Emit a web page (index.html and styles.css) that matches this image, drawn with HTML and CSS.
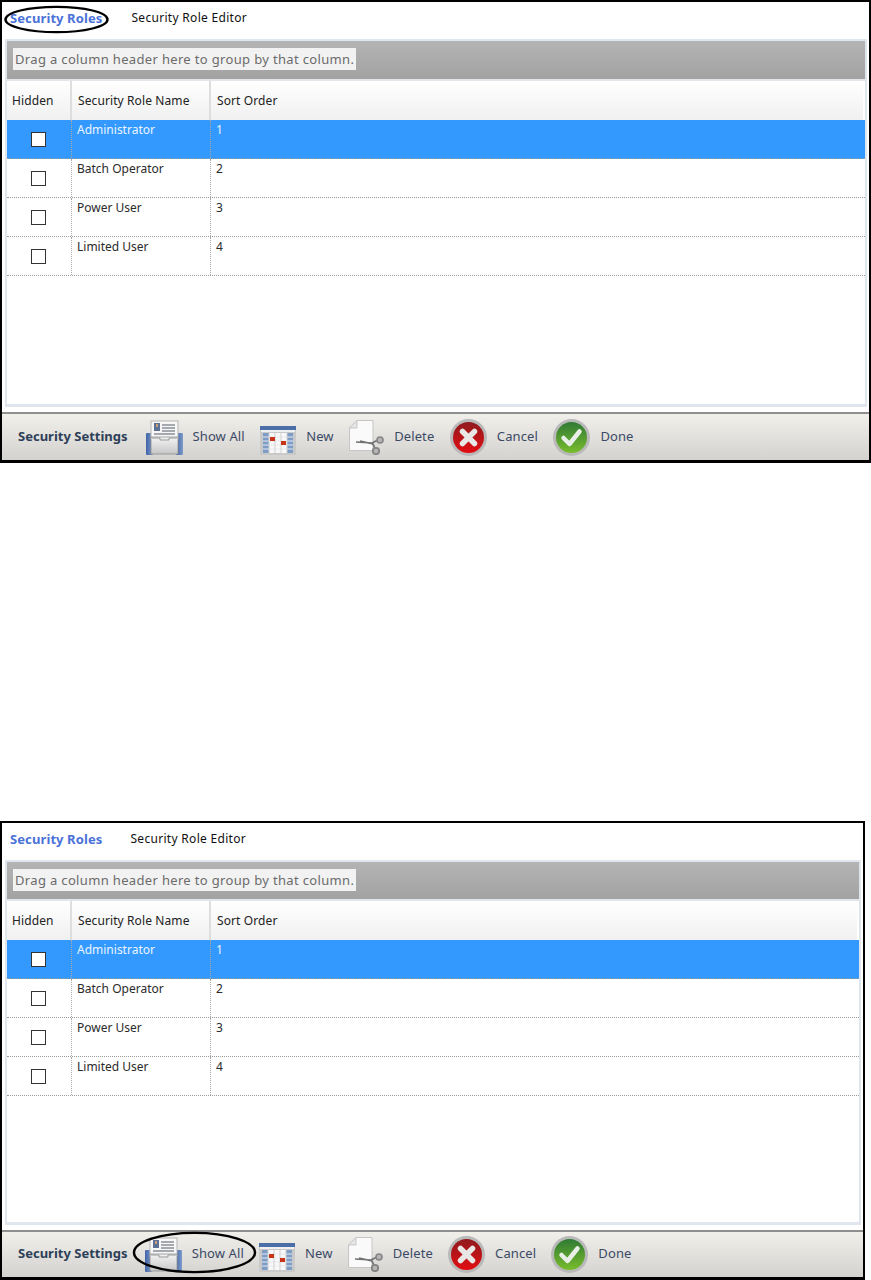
FILE: index.html
```html
<!DOCTYPE html>
<html lang="en">
<head>
    <meta charset="UTF-8">
    <title>Security Roles</title>
    <link rel="stylesheet" href="styles.css">
</head>
<body>

    <!-- toolbar icons, used by both windows -->
    <svg class="icon-defs" width="0" height="0">
        <defs>
            <linearGradient id="red-fill" x1="0" y1="0" x2="0" y2="1">
                <stop offset="0" stop-color="#8f1a1e"/>
                <stop offset="1" stop-color="#e30d12"/>
            </linearGradient>
            <linearGradient id="green-fill" x1="0" y1="0" x2="0" y2="1">
                <stop offset="0" stop-color="#2f7a35"/>
                <stop offset="1" stop-color="#79bd2c"/>
            </linearGradient>
            <linearGradient id="tray-fill" x1="0" y1="0" x2="0" y2="1">
                <stop offset="0" stop-color="#f4f4f4"/>
                <stop offset="1" stop-color="#c6c6c6"/>
            </linearGradient>
            <linearGradient id="side-fill" x1="0" y1="0" x2="1" y2="0">
                <stop offset="0" stop-color="#3f63a8"/>
                <stop offset="1" stop-color="#7f9bca"/>
            </linearGradient>
        </defs>
        <symbol id="icon-show" viewBox="0 0 37 35">
            <rect x="0" y="13" width="7" height="22" rx="1" fill="url(#side-fill)"/>
            <rect x="30" y="13" width="7" height="22" rx="1" fill="url(#side-fill)"/>
            <rect x="5" y="1" width="27" height="18" fill="#f7f7f7" stroke="#b5b5b5"/>
            <rect x="8" y="3" width="6" height="8" fill="#5c6f94"/>
            <rect x="10" y="4" width="2" height="3" fill="#c79a78"/>
            <path d="M16 5h13M16 8h13M16 11h13M8 14h21" stroke="#8a8f98" stroke-width="1.3"/>
            <path d="M5 17h27v17H5z" fill="url(#tray-fill)" stroke="#8d8d8d" stroke-width=".8"/>
            <path d="M6 18h8v2h9v-2h8" fill="none" stroke="#9a9a9a"/>
        </symbol>
        <symbol id="icon-new" viewBox="0 0 36 29">
            <rect x="0" y="0" width="36" height="29" fill="#c9c9c9"/>
            <rect x="0" y="0" width="36" height="4" fill="#4c6ea6"/>
            <rect x="1" y="4" width="34" height="2" fill="#eef0f2"/>
            <rect x="3" y="7" width="30" height="20" fill="#f8f8f8"/>
            <path d="M3 7h6v20H3zM27 7h6v20h-6z" fill="#7d9cc6"/>
            <path d="M3 11h30M3 15h30M3 19h30M3 23h30" stroke="#e6e9ee" stroke-width="1.2"/>
            <path d="M9 7v20M15 7v20M21 7v20M27 7v20" stroke="#d0d0d0" stroke-width="1"/>
            <rect x="10" y="11" width="5" height="4" fill="#c8341a"/>
            <rect x="21" y="15" width="5" height="4" fill="#c8341a"/>
        </symbol>
        <symbol id="icon-delete" viewBox="0 0 35 35">
            <path d="M8 .5h16v30H.5V8z" fill="#fafafa" stroke="#c6c6c6"/>
            <path d="M8 .5V8H.5z" fill="#e6e6e6" stroke="#c6c6c6"/>
            <path d="M7 22l16 1 8-4M11 21l13 3 3 7" fill="none" stroke="#6f7172" stroke-width="1.7"/>
            <circle cx="31" cy="20" r="3" fill="#b5b5b5" stroke="#858585" stroke-width="1.6"/>
            <circle cx="27" cy="31" r="3.200" fill="#b5b5b5" stroke="#858585" stroke-width="1.8"/>
        </symbol>
        <symbol id="icon-cancel" viewBox="0 0 37 37">
            <circle cx="18.5" cy="18.5" r="18.5" fill="#b9b9b9"/>
            <circle cx="18.5" cy="18.5" r="15.5" fill="url(#red-fill)"/>
            <path d="M12.5 12.5l12 12M24.500 12.5l-12 12" stroke="#e9e6e6" stroke-width="5.5" stroke-linecap="round"/>
        </symbol>
        <symbol id="icon-done" viewBox="0 0 37 37">
            <circle cx="18.5" cy="18.5" r="18.5" fill="#b9b9b9"/>
            <circle cx="18.5" cy="18.5" r="15.500" fill="url(#green-fill)"/>
            <path d="M10.500 19l6 6 10-12.500" fill="none" stroke="#e9eee6" stroke-width="4.500" stroke-linecap="round" stroke-linejoin="round"/>
        </symbol>
    </svg>

    <div class="window window-first">
        <div class="tabs">
            <span class="tab tab-active">Security Roles
                <svg class="mark mark-tab" viewBox="0 0 106 32" preserveAspectRatio="none"><ellipse cx="53" cy="16" rx="51.500" ry="14" fill="none" stroke="#000" stroke-width="2.500"/></svg>
            </span>
            <span class="tab">Security Role Editor</span>
        </div>
        <div class="grid-box">
            <div class="group-panel"><span class="group-hint">Drag a column header here to group by that column.</span></div>
            <div class="row row-head">
                <div class="cell head-cell">Hidden</div>
                <div class="cell head-cell">Security Role Name</div>
                <div class="cell head-cell">Sort Order</div>
            </div>
            <div class="row row-selected">
                <div class="cell cell-check"><span class="check"></span></div>
                <div class="cell">Administrator</div>
                <div class="cell">1</div>
            </div>
            <div class="row">
                <div class="cell cell-check"><span class="check"></span></div>
                <div class="cell">Batch Operator</div>
                <div class="cell">2</div>
            </div>
            <div class="row">
                <div class="cell cell-check"><span class="check"></span></div>
                <div class="cell">Power User</div>
                <div class="cell">3</div>
            </div>
            <div class="row">
                <div class="cell cell-check"><span class="check"></span></div>
                <div class="cell">Limited User</div>
                <div class="cell">4</div>
            </div>
        </div>
        <div class="toolbar">
            <span class="toolbar-title">Security Settings</span>
            <span class="tool"><svg class="tool-icon icon-show"><use href="#icon-show"/></svg>Show All</span>
            <span class="tool"><svg class="tool-icon icon-new"><use href="#icon-new"/></svg>New</span>
            <span class="tool"><svg class="tool-icon icon-delete"><use href="#icon-delete"/></svg>Delete</span>
            <span class="tool"><svg class="tool-icon icon-round"><use href="#icon-cancel"/></svg>Cancel</span>
            <span class="tool"><svg class="tool-icon icon-round"><use href="#icon-done"/></svg>Done</span>
        </div>
    </div>

    <div class="window window-second">
        <div class="tabs">
            <span class="tab tab-active">Security Roles</span>
            <span class="tab">Security Role Editor</span>
        </div>
        <div class="grid-box">
            <div class="group-panel"><span class="group-hint">Drag a column header here to group by that column.</span></div>
            <div class="row row-head">
                <div class="cell head-cell">Hidden</div>
                <div class="cell head-cell">Security Role Name</div>
                <div class="cell head-cell">Sort Order</div>
            </div>
            <div class="row row-selected">
                <div class="cell cell-check"><span class="check"></span></div>
                <div class="cell">Administrator</div>
                <div class="cell">1</div>
            </div>
            <div class="row">
                <div class="cell cell-check"><span class="check"></span></div>
                <div class="cell">Batch Operator</div>
                <div class="cell">2</div>
            </div>
            <div class="row">
                <div class="cell cell-check"><span class="check"></span></div>
                <div class="cell">Power User</div>
                <div class="cell">3</div>
            </div>
            <div class="row">
                <div class="cell cell-check"><span class="check"></span></div>
                <div class="cell">Limited User</div>
                <div class="cell">4</div>
            </div>
        </div>
        <div class="toolbar">
            <span class="toolbar-title">Security Settings</span>
            <span class="tool"><svg class="tool-icon icon-show"><use href="#icon-show"/></svg>Show All
                <svg class="mark mark-tool" viewBox="0 0 126 46" preserveAspectRatio="none"><ellipse cx="63" cy="23" rx="61" ry="21" fill="none" stroke="#000" stroke-width="2.500"/></svg>
            </span>
            <span class="tool"><svg class="tool-icon icon-new"><use href="#icon-new"/></svg>New</span>
            <span class="tool"><svg class="tool-icon icon-delete"><use href="#icon-delete"/></svg>Delete</span>
            <span class="tool"><svg class="tool-icon icon-round"><use href="#icon-cancel"/></svg>Cancel</span>
            <span class="tool"><svg class="tool-icon icon-round"><use href="#icon-done"/></svg>Done</span>
        </div>
    </div>

</body>
</html>
```

FILE: styles.css
```css
body {
    margin: 0;
    background: #fff;
    font-family: "Noto Sans", "Open Sans", sans-serif;
    font-size: 12px;
    color: #2b2b2b;
}

.icon-defs {
    position: absolute;
}

.window {
    box-sizing: border-box;
    border: 2px solid #000;
    border-bottom-width: 3px;
    background: #fff;
    display: flex;
    flex-direction: column;
}

.window-first {
    width: 871px;
    height: 463px;
}

.window-second {
    width: 865px;
    height: 459px;
    margin-top: 358px;
}

.tabs {
    display: flex;
    align-items: center;
    box-sizing: border-box;
    height: 37px;
    padding: 0 0 6px 8px;
    gap: 29px;
    flex: none;
}

.window-second .tabs {
    gap: 28px;
}

.tab {
    position: relative;
    line-height: 18px;
    color: #111;
    letter-spacing: 0.3px;
}

.tab-active {
    color: #4a72d8;
    font-size: 13px;
    font-weight: bold;
    letter-spacing: 0.1px;
}

.mark {
    position: absolute;
    pointer-events: none;
}

.mark-tab {
    left: -6px;
    top: -4px;
    width: 105px;
    height: 29px;
}

.mark-tool {
    left: -13px;
    top: -4px;
    width: 125px;
    height: 43px;
}

.grid-box {
    flex: 1;
    margin: 0 2px 0 3px;
    border: 2px solid #dfe6ee;
    border-bottom-width: 3px;
    display: flex;
    flex-direction: column;
}

.group-panel {
    height: 40px;
    flex: none;
    box-sizing: border-box;
    display: flex;
    align-items: center;
    padding: 0 0 2px 6px;
    background: linear-gradient(#b4b4b4, #a2a2a2);
    background-clip: padding-box;
    border-bottom: 2px solid #e2e6ea;
}

.window-second .group-panel {
    height: 39px;
}

.group-hint {
    background: #f2f2f2;
    color: #6b6b6b;
    font-size: 13px;
    padding: 2px;
    letter-spacing: 0.34px;
}

.row {
    display: grid;
    grid-template-columns: 65px 139px 1fr;
    height: 39px;
    flex: none;
    box-sizing: border-box;
    border-bottom: 1px dotted #9a9a9a;
}

.row-head {
    border-bottom: 0;
    margin-right: 2px;
    background: linear-gradient(#fff, #f0f0f0);
}

.cell {
    padding: 0 5px;
    line-height: 20px;
    border-right: 1px dotted #a8a8a8;
}

.cell:last-child {
    border-right: 0;
}

.head-cell {
    padding-left: 6px;
    line-height: 39px;
    color: #222;
    letter-spacing: 0.1px;
    border-right: 2px solid #dedede;
}

.head-cell:first-child {
    padding-left: 5px;
}

.row-selected {
    background: #3399ff;
    color: #eaf4ff;
}

.cell-check {
    display: flex;
    align-items: center;
    justify-content: center;
    padding: 0 2px 0 0;
}

.check {
    box-sizing: border-box;
    width: 15px;
    height: 15px;
    margin-top: 1px;
    background: #fff;
    border: 1px solid #333;
}

.toolbar {
    flex: none;
    height: 48px;
    margin-top: 5px;
    box-sizing: border-box;
    display: flex;
    align-items: center;
    gap: 15.5px;
    padding: 0 0 2px 16px;
    font-size: 13px;
    background: linear-gradient(#f1efea, #d4d2cf);
    border-top: 2px solid #8f8f8f;
}

.window-second .toolbar {
    height: 47px;
    gap: 15.2px;
    padding-bottom: 3px;
}

.toolbar-title {
    font-weight: bold;
    color: #2d3f58;
    margin-right: 2.500px;
}

.window-second .toolbar-title {
    margin-right: 2px;
}

.tool {
    position: relative;
    display: flex;
    align-items: center;
    gap: 10px;
    color: #3a4a66;
    letter-spacing: 0.1px;
}

.tool-icon {
    flex: none;
    margin-top: 2px;
}

.icon-show {
    width: 37px;
    height: 35px;
}

.icon-new {
    width: 36px;
    height: 29px;
    margin-top: 8px;
}

.icon-delete {
    width: 35px;
    height: 35px;
}

.icon-round {
    width: 37px;
    height: 37px;
}
```
